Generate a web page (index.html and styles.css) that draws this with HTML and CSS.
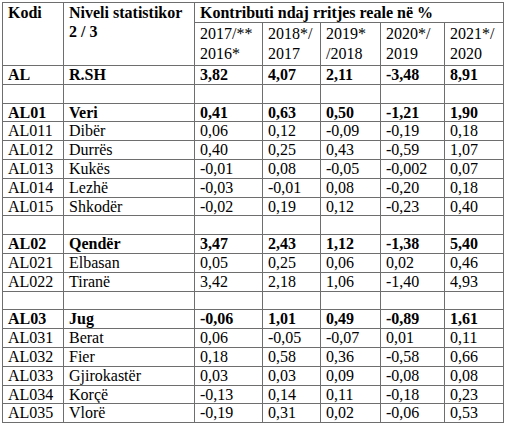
FILE: index.html
```html
<!DOCTYPE html>
<html>
<head>
<meta charset="utf-8">
<link rel="stylesheet" href="styles.css">
</head>
<body>
<table class="tbl">
<colgroup>
<col class="c1"><col class="c2"><col class="c3"><col class="c4"><col class="c5"><col class="c6"><col class="c7">
</colgroup>
<thead>
<tr class="h1">
<th rowspan="2">Kodi</th>
<th rowspan="2">Niveli statistikor<br>2 / 3</th>
<th colspan="5">Kontributi ndaj rritjes reale në %</th>
</tr>
<tr class="h2">
<td>2017/**<br>2016*</td>
<td>2018*/<br>2017</td>
<td>2019*<br>/2018</td>
<td>2020*/<br>2019</td>
<td>2021*/<br>2020</td>
</tr>
</thead>
<tbody>
<tr class="b"><td>AL</td><td>R.SH</td><td>3,82</td><td>4,07</td><td>2,11</td><td>-3,48</td><td>8,91</td></tr>
<tr><td></td><td></td><td></td><td></td><td></td><td></td><td></td></tr>
<tr class="b"><td>AL01</td><td>Veri</td><td>0,41</td><td>0,63</td><td>0,50</td><td>-1,21</td><td>1,90</td></tr>
<tr><td>AL011</td><td>Dibër</td><td>0,06</td><td>0,12</td><td>-0,09</td><td>-0,19</td><td>0,18</td></tr>
<tr><td>AL012</td><td>Durrës</td><td>0,40</td><td>0,25</td><td>0,43</td><td>-0,59</td><td>1,07</td></tr>
<tr><td>AL013</td><td>Kukës</td><td>-0,01</td><td>0,08</td><td>-0,05</td><td>-0,002</td><td>0,07</td></tr>
<tr><td>AL014</td><td>Lezhë</td><td>-0,03</td><td>-0,01</td><td>0,08</td><td>-0,20</td><td>0,18</td></tr>
<tr><td>AL015</td><td>Shkodër</td><td>-0,02</td><td>0,19</td><td>0,12</td><td>-0,23</td><td>0,40</td></tr>
<tr><td></td><td></td><td></td><td></td><td></td><td></td><td></td></tr>
<tr class="b"><td>AL02</td><td>Qendër</td><td>3,47</td><td>2,43</td><td>1,12</td><td>-1,38</td><td>5,40</td></tr>
<tr><td>AL021</td><td>Elbasan</td><td>0,05</td><td>0,25</td><td>0,06</td><td>0,02</td><td>0,46</td></tr>
<tr><td>AL022</td><td>Tiranë</td><td>3,42</td><td>2,18</td><td>1,06</td><td>-1,40</td><td>4,93</td></tr>
<tr><td></td><td></td><td></td><td></td><td></td><td></td><td></td></tr>
<tr class="b"><td>AL03</td><td>Jug</td><td>-0,06</td><td>1,01</td><td>0,49</td><td>-0,89</td><td>1,61</td></tr>
<tr><td>AL031</td><td>Berat</td><td>0,06</td><td>-0,05</td><td>-0,07</td><td>0,01</td><td>0,11</td></tr>
<tr><td>AL032</td><td>Fier</td><td>0,18</td><td>0,58</td><td>0,36</td><td>-0,58</td><td>0,66</td></tr>
<tr><td>AL033</td><td>Gjirokastër</td><td>0,03</td><td>0,03</td><td>0,09</td><td>-0,08</td><td>0,08</td></tr>
<tr><td>AL034</td><td>Korçë</td><td>-0,13</td><td>0,14</td><td>0,11</td><td>-0,18</td><td>0,23</td></tr>
<tr><td>AL035</td><td>Vlorë</td><td>-0,19</td><td>0,31</td><td>0,02</td><td>-0,06</td><td>0,53</td></tr>
</tbody>
</table>
</body>
</html>
```
FILE: styles.css
```css
html, body {
  margin: 0;
  padding: 0;
  background: #ffffff;
}
body {
  padding: 2px 0 0 2px;
}
.tbl {
  border-collapse: collapse;
  table-layout: fixed;
  width: 502px;
  font-family: "Liberation Serif", "Times New Roman", serif;
  font-size: 16px;
  color: #000;
}
.c1 { width: 61px; }
.c2 { width: 131px; }
.c3 { width: 68px; }
.c4 { width: 58px; }
.c5 { width: 60px; }
.c6 { width: 64px; }
.c7 { width: 59px; }
.tbl th, .tbl td {
  border: 1px solid #6e6e6e;
  padding: 0 0 0 5px;
  text-align: left;
  vertical-align: top;
  line-height: 17.8px;
  height: 17.8px;
  white-space: nowrap;
  overflow: hidden;
}
.tbl th {
  font-weight: bold;
}
.h1 th {
  line-height: 19px;
  height: 19px;
}
.h2 td {
  line-height: 20px;
  padding-top: 1px;
  height: 41px;
}
.b td {
  font-weight: bold;
}
```
